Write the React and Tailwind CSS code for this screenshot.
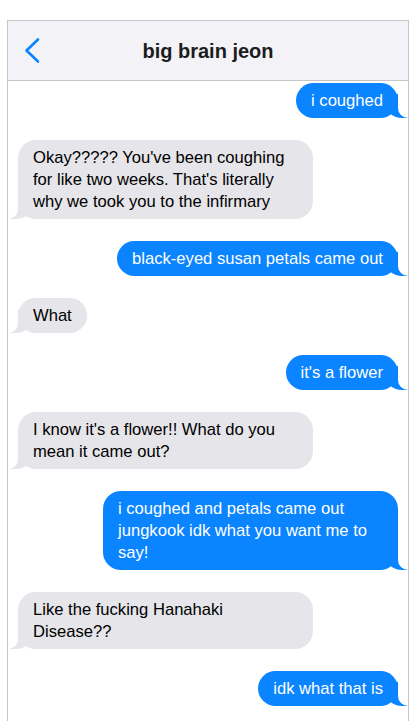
const messages = [
  { me: true, text: 'i coughed' },
  { me: false, text: "Okay????? You've been coughing for like two weeks. That's literally why we took you to the infirmary" },
  { me: true, text: 'black-eyed susan petals came out' },
  { me: false, text: 'What' },
  { me: true, text: "it's a flower" },
  { me: false, text: "I know it's a flower!! What do you mean it came out?" },
  { me: true, text: 'i coughed and petals came out jungkook idk what you want me to say!' },
  { me: false, text: 'Like the fucking Hanahaki Disease??' },
  { me: true, text: 'idk what that is' },
]

function Bubble({ me, text }) {
  if (me) {
    return (
      <div className="flex justify-end">
        <div className="relative max-w-[295px] bg-[#0a84ff] text-white rounded-[18px] px-[15px] py-[6.5px] text-[16.6px] leading-[22px]">
          {text}
          <span className="absolute bottom-0 right-[-10px] w-[22px] h-[24px] bg-[#0a84ff] rounded-bl-[16px_14px]" />
          <span className="absolute bottom-0 right-[-26px] w-[26px] h-[24px] bg-white rounded-bl-[10px]" />
        </div>
      </div>
    )
  }
  return (
    <div className="flex justify-start">
      <div className="relative max-w-[295px] bg-[#e5e5ea] text-black rounded-[18px] px-[15px] py-[6.5px] text-[16.6px] leading-[22px]">
        {text}
        <span className="absolute bottom-0 left-[-8px] w-[22px] h-[24px] bg-[#e5e5ea] rounded-br-[16px_14px]" />
        <span className="absolute bottom-0 left-[-26px] w-[26px] h-[24px] bg-white rounded-br-[10px]" />
      </div>
    </div>
  )
}

export default function App() {
  return (
    <div className="min-h-screen bg-white pt-[20px] pl-[7px]" style={{ fontFamily: '"Liberation Sans", Arial, sans-serif' }}>
      <div className="w-[402px] h-[720px] border border-[#c6c6ca] border-b-0 overflow-hidden">
        <div className="h-[60px] bg-[#f2f2f7] border-b border-[#c6c6ca] grid grid-cols-[50px_1fr_50px] items-center">
          <div className="pl-[15px] flex items-center">
            <svg width="18" height="27" viewBox="0 0 18 27" fill="none">
              <path d="M15 2.5 L3.5 13.5 L15 24.5" stroke="#0a84ff" strokeWidth="2.6" strokeLinecap="round" strokeLinejoin="round" />
            </svg>
          </div>
          <h1 className="text-center font-bold text-[20px] text-[#1c1c1e]">big brain jeon</h1>
          <div />
        </div>
        <div className="flex flex-col gap-[22px] px-[10px] pt-[2px]">
          {messages.map((m, i) => <Bubble key={i} {...m} />)}
        </div>
      </div>
    </div>
  )
}
